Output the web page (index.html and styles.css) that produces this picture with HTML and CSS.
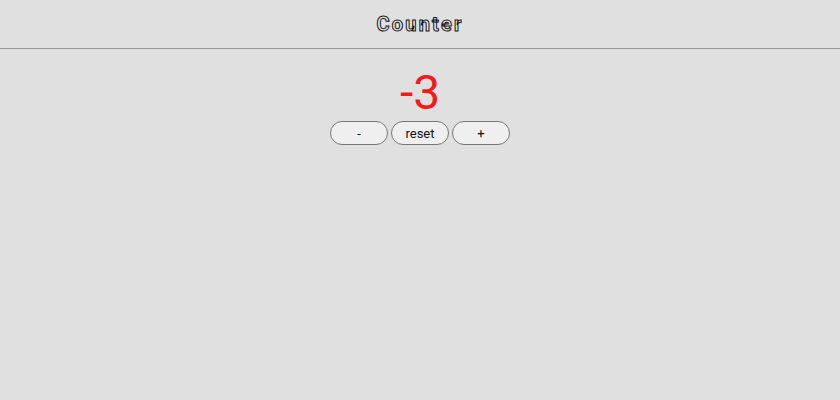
FILE: index.html
```html
<!DOCTYPE html>
<html>
<head>
<meta charset="utf-8">
<link rel="stylesheet" href="styles.css">
</head>
<body>
<header class="header"><h1 class="title">Counter</h1></header>
<main class="main">
  <div class="count">-3</div>
  <div class="buttons">
    <button class="btn">-</button>
    <button class="btn">reset</button>
    <button class="btn">+</button>
  </div>
</main>
</body>
</html>
```
FILE: styles.css
```css
html, body {
  margin: 0;
  padding: 0;
  height: 100%;
  background: #e0e0e0;
  font-family: Roboto, "Liberation Sans", sans-serif;
}
.header {
  height: 48px;
  border-bottom: 1px solid #999;
  display: flex;
  align-items: center;
  justify-content: center;
}
.title {
  margin: 0;
  font-size: 20px;
  font-weight: 700;
  letter-spacing: 2.2px;
  color: #e8e8e8;
  -webkit-text-stroke: 1px #111;
}
.main {
  display: flex;
  flex-direction: column;
  align-items: center;
  padding-top: 16px;
}
.count {
  color: #f21a1a;
  font-size: 48px;
  line-height: 56px;
}
.buttons {
  display: flex;
  gap: 3px;
}
.btn {
  width: 58px;
  height: 24px;
  border: 1px solid #777;
  border-radius: 12px;
  background: #efefef;
  font-family: Roboto, "Liberation Sans", sans-serif;
  font-size: 13px;
  font-weight: 400;
  color: #111;
  padding: 0;
}
```
